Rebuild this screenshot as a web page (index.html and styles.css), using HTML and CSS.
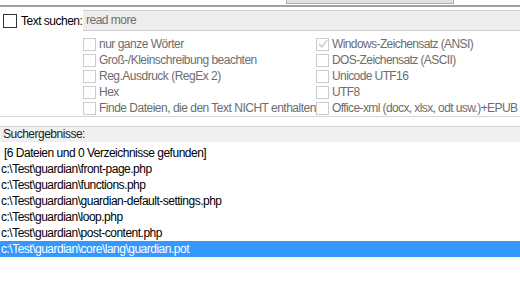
FILE: index.html
```html
<!DOCTYPE html>
<html lang="de">
<head>
    <meta charset="UTF-8">
    <title>Suche</title>
    <link rel="stylesheet" href="styles.css">
</head>
<body>
    <div class="top-strip">
        <div class="top-button"></div>
    </div>

    <div class="search-row">
        <label class="search-label">
            <span class="box box-dark"></span>
            Text suchen:
        </label>
        <div class="search-input">read more</div>
    </div>

    <div class="options">
        <div class="opt-col">
            <div class="opt"><span class="box"></span>nur ganze Wörter</div>
            <div class="opt"><span class="box"></span>Groß-/Kleinschreibung beachten</div>
            <div class="opt"><span class="box"></span>Reg.Ausdruck (RegEx 2)</div>
            <div class="opt"><span class="box"></span>Hex</div>
            <div class="opt"><span class="box"></span>Finde Dateien, die den Text NICHT enthalten</div>
        </div>
        <div class="opt-col">
            <div class="opt">
                <span class="box">
                    <svg width="10" height="10" viewBox="0 0 10 10"><path d="M1 5 L4 8 L9 1" fill="none" stroke="#c4c4c4" stroke-width="1.2"/></svg>
                </span>Windows-Zeichensatz (ANSI)
            </div>
            <div class="opt"><span class="box"></span>DOS-Zeichensatz (ASCII)</div>
            <div class="opt"><span class="box"></span>Unicode UTF16</div>
            <div class="opt"><span class="box"></span>UTF8</div>
            <div class="opt"><span class="box"></span>Office-xml (docx, xlsx, odt usw.)+EPUB</div>
        </div>
    </div>

    <div class="results-head">Suchergebnisse:</div>
    <ul class="results">
        <li class="summary">[6 Dateien und 0 Verzeichnisse gefunden]</li>
        <li>c:\Test\guardian\front-page.php</li>
        <li>c:\Test\guardian\functions.php</li>
        <li>c:\Test\guardian\guardian-default-settings.php</li>
        <li>c:\Test\guardian\loop.php</li>
        <li>c:\Test\guardian\post-content.php</li>
        <li class="selected">c:\Test\guardian\core\lang\guardian.pot</li>
    </ul>
</body>
</html>
```

FILE: styles.css
```css
body {
    font-family: "Liberation Sans", Arial, sans-serif;
    font-size: 12px;
    letter-spacing: -0.5px;
    margin: 0;
    width: 520px;
    height: 301px;
    background: white;
    color: #000;
    overflow: hidden;
}

.top-strip {
    height: 5px;
    border-bottom: 2px solid #a0a0a0;
    padding-left: 286px;
}

.top-button {
    width: 166px;
    height: 3px;
    background: #e1e1e1;
    border: 1px solid #adadad;
    border-top: none;
}

.search-row {
    display: flex;
    align-items: center;
    margin-top: 3px;
    height: 21px;
}

.search-label {
    display: flex;
    align-items: center;
    gap: 4px;
    width: 80px;
    padding-left: 3px;
}

.search-input {
    flex: 1;
    height: 19px;
    line-height: 19px;
    background: #eeeeee;
    border-top: 1px solid #d0d0d0;
    border-bottom: 1px solid #d0d0d0;
    color: #6d6d6d;
    padding-left: 3px;
}

.box {
    display: inline-flex;
    align-items: center;
    justify-content: center;
    width: 11px;
    height: 11px;
    border: 1px solid #cccccc;
    background: white;
    margin-right: 3px;
    flex-shrink: 0;
}

.box-dark {
    width: 12px;
    height: 12px;
    border-color: #333333;
    margin-right: 0;
}

.options {
    display: flex;
    padding-left: 83px;
    padding-top: 5px;
    height: 80px;
    border-bottom: 1px solid #d5d5d5;
}

.opt-col {
    width: 233px;
}

.opt-col + .opt-col {
    width: auto;
    letter-spacing: -0.6px;
}

.opt {
    display: flex;
    align-items: center;
    height: 16px;
    color: #6d6d6d;
    white-space: nowrap;
}

.results-head {
    margin-top: 9px;
    height: 15px;
    line-height: 15px;
    background: #f0f0f0;
    border-top: 1px solid #d5d5d5;
    padding-left: 3px;
    color: #1e1e1e;
}

.results {
    list-style: none;
    margin: 3px 0 0;
    padding: 0;
}

.results li {
    height: 16px;
    line-height: 16px;
    padding-left: 1px;
    white-space: nowrap;
}

.results .summary {
    padding-left: 4px;
}

.results .selected {
    background: #3399ff;
    color: white;
}
```
